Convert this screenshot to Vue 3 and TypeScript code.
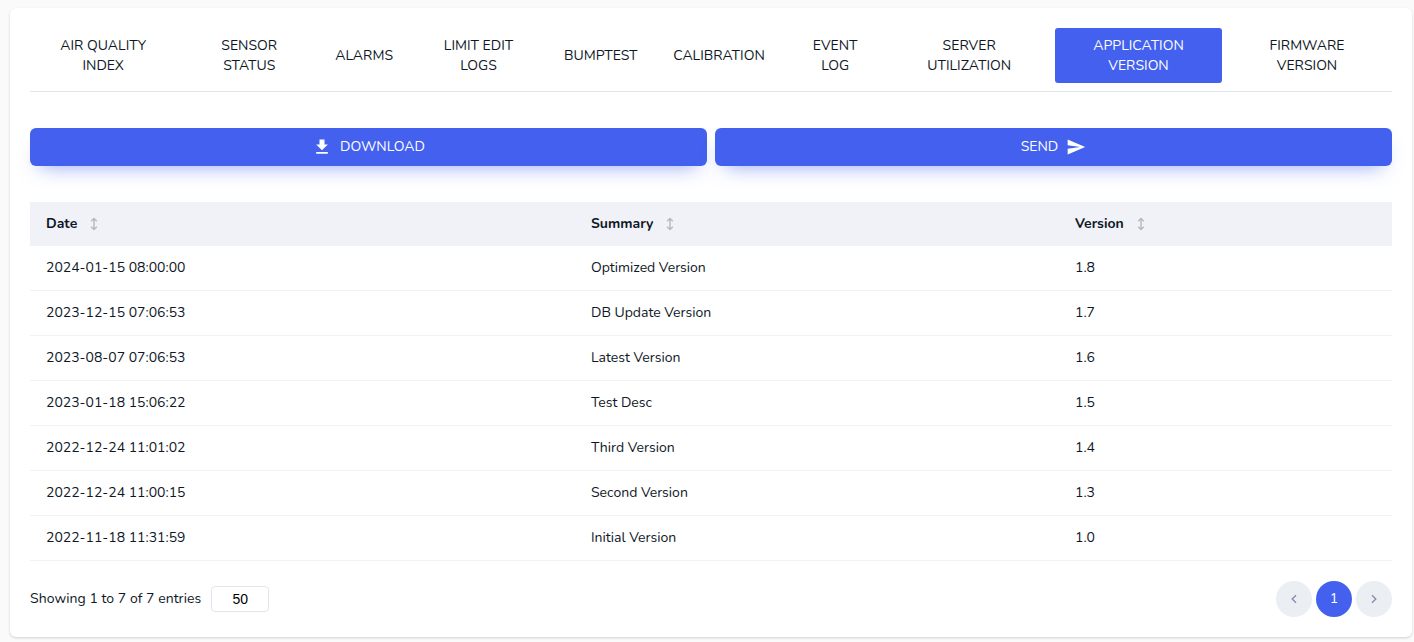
<script setup lang="ts">
interface Tab {
  lines: string[]
  active?: boolean
}

interface Entry {
  date: string
  summary: string
  version: string
}

const tabs: Tab[] = [
  { lines: ['AIR QUALITY', 'INDEX'] },
  { lines: ['SENSOR', 'STATUS'] },
  { lines: ['ALARMS'] },
  { lines: ['LIMIT EDIT', 'LOGS'] },
  { lines: ['BUMPTEST'] },
  { lines: ['CALIBRATION'] },
  { lines: ['EVENT', 'LOG'] },
  { lines: ['SERVER', 'UTILIZATION'] },
  { lines: ['APPLICATION', 'VERSION'], active: true },
  { lines: ['FIRMWARE', 'VERSION'] },
]

const columns: string[] = ['Date', 'Summary', 'Version']

const entries: Entry[] = [
  { date: '2024-01-15 08:00:00', summary: 'Optimized Version', version: '1.8' },
  { date: '2023-12-15 07:06:53', summary: 'DB Update Version', version: '1.7' },
  { date: '2023-08-07 07:06:53', summary: 'Latest Version', version: '1.6' },
  { date: '2023-01-18 15:06:22', summary: 'Test Desc', version: '1.5' },
  { date: '2022-12-24 11:01:02', summary: 'Third Version', version: '1.4' },
  { date: '2022-12-24 11:00:15', summary: 'Second Version', version: '1.3' },
  { date: '2022-11-18 11:31:59', summary: 'Initial Version', version: '1.0' },
]
</script>

<template>
  <main class="page">
    <section class="panel">
      <nav class="tabs">
        <a v-for="tab in tabs" :key="tab.lines.join(' ')" class="tab" :class="{ active: tab.active }">
          <span v-for="line in tab.lines" :key="line">{{ line }}</span>
        </a>
      </nav>

      <div class="actions">
        <button class="action" type="button">
          <svg viewBox="0 0 24 24" width="20" height="20" fill="currentColor">
            <path d="M19 9h-4V3H9v6H5l7 7 7-7zM5 18v2h14v-2H5z" />
          </svg>
          <span>DOWNLOAD</span>
        </button>
        <button class="action" type="button">
          <span>SEND</span>
          <svg viewBox="0 0 24 24" width="20" height="20" fill="currentColor">
            <path d="M2.01 21 23 12 2.01 3 2 10l15 2-15 2z" />
          </svg>
        </button>
      </div>

      <table class="table">
        <colgroup>
          <col class="col-date" />
          <col class="col-summary" />
          <col />
        </colgroup>
        <thead>
          <tr>
            <th v-for="column in columns" :key="column">
              <div class="heading">
                <span>{{ column }}</span>
                <svg viewBox="0 0 8 14" width="8" height="14" fill="none" stroke="#b3bac0" stroke-width="1.4">
                  <path d="M4 1.5v11M1.2 4.3 4 1.5l2.8 2.8M1.2 9.7 4 12.5l2.8-2.8" />
                </svg>
              </div>
            </th>
          </tr>
        </thead>
        <tbody>
          <tr v-for="entry in entries" :key="entry.date">
            <td>{{ entry.date }}</td>
            <td>{{ entry.summary }}</td>
            <td>{{ entry.version }}</td>
          </tr>
        </tbody>
      </table>

      <footer class="footer">
        <div class="summary">
          <span class="summary-text">Showing 1 to 7 of 7 entries</span>
          <span class="page-size">50</span>
        </div>
        <div class="pager">
          <button type="button" class="page-button">
            <svg viewBox="0 0 8 10" width="8" height="10" fill="none" stroke="currentColor" stroke-width="1.4">
              <path d="M6 1.2 2.2 5 6 8.8" />
            </svg>
          </button>
          <button type="button" class="page-button current">1</button>
          <button type="button" class="page-button">
            <svg viewBox="0 0 8 10" width="8" height="10" fill="none" stroke="currentColor" stroke-width="1.4">
              <path d="M2 1.2 5.8 5 2 8.8" />
            </svg>
          </button>
        </div>
      </footer>
    </section>
  </main>
</template>

<style>
body {
  background: #fafafa;
}
</style>

<style scoped>
.page {
  box-sizing: border-box;
  height: 642px;
  padding: 8px 2px 5px 10px;
  overflow: hidden;
  font: 14px/20px Nunito, Lato, "Noto Sans", sans-serif;
  color: #0e1726;
}
.panel {
  box-sizing: border-box;
  height: 629px;
  padding: 20px;
  border-radius: 6px;
  background: #fff;
  box-shadow: 0 1px 3px rgba(0, 0, 0, 0.12), 0 1px 2px rgba(0, 0, 0, 0.05);
}
.tabs {
  display: grid;
  grid-template-columns: 146.4fr 145.6fr 84.4fr 144.2fr 100.4fr 136fr 96.4fr 171.6fr 167fr 170fr;
  padding-bottom: 8px;
  border-bottom: 1px solid #e3e4e6;
}
.tab {
  display: flex;
  flex-direction: column;
  align-items: center;
  justify-content: center;
  box-sizing: border-box;
  height: 55px;
  padding-top: 1px;
  border-radius: 3px;
  white-space: nowrap;
}
.tab.active {
  background: #4361ee;
  color: #fff;
}
.actions {
  display: grid;
  grid-template-columns: 1fr 1fr;
  gap: 8px;
  margin-top: 36px;
}
.action {
  display: flex;
  align-items: center;
  justify-content: center;
  gap: 8px;
  height: 38px;
  padding: 0;
  border: 0;
  border-radius: 6px;
  background: #4361ee;
  box-shadow: 0 10px 20px -10px rgba(67, 97, 238, 0.6);
  color: #fff;
  font: inherit;
}
.table {
  width: 100%;
  margin-top: 36px;
  border-collapse: separate;
  border-spacing: 0;
  table-layout: fixed;
}
.col-date {
  width: 545px;
}
.col-summary {
  width: 484px;
}
th,
td {
  box-sizing: border-box;
  padding: 0 16px;
  text-align: left;
}
th {
  height: 44px;
  background: #f1f2f8;
  font-weight: 700;
}
.heading {
  display: flex;
  align-items: center;
  gap: 13px;
}
td {
  height: 45px;
  border-bottom: 1px solid #f1f2f6;
}
.footer {
  display: flex;
  align-items: center;
  justify-content: space-between;
  margin-top: 20px;
}
.summary {
  display: flex;
  align-items: center;
  gap: 10px;
}
.summary-text {
  letter-spacing: 0.045px;
}
.page-size {
  box-sizing: border-box;
  width: 58px;
  height: 26px;
  border: 1px solid #e0e6ed;
  border-radius: 4px;
  font: 14px/25px "Liberation Sans", Arial, sans-serif;
  text-align: center;
  color: #000;
}
.pager {
  display: flex;
  gap: 4px;
}
.page-button {
  display: flex;
  align-items: center;
  justify-content: center;
  width: 36px;
  height: 36px;
  padding: 0;
  border: 0;
  border-radius: 50%;
  background: #ebeef3;
  color: #888ea8;
  font: inherit;
}
.page-button.current {
  background: #4361ee;
  color: #fff;
}
</style>
